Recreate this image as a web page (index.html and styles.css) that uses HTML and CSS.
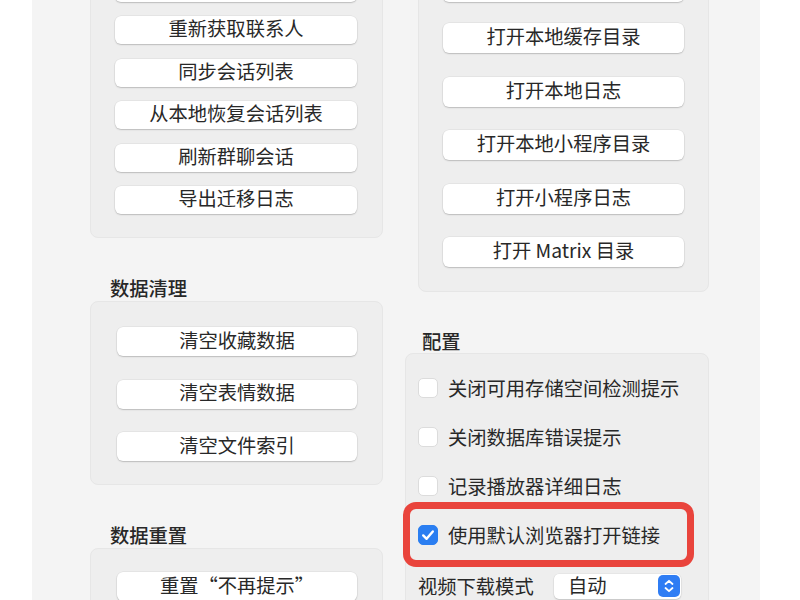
FILE: index.html
```html
<!DOCTYPE html>
<html lang="zh-CN">
<head>
<meta charset="utf-8">
<title>设置</title>
<link rel="stylesheet" href="styles.css">
</head>
<body>
<div class="window">
  <div class="col col-left">
    <div class="panel panel-a">
      <div class="btn" aria-hidden="true"></div>
      <div class="btn">重新获取联系人</div>
      <div class="btn">同步会话列表</div>
      <div class="btn">从本地恢复会话列表</div>
      <div class="btn">刷新群聊会话</div>
      <div class="btn">导出迁移日志</div>
    </div>
    <div class="title">数据清理</div>
    <div class="panel panel-b">
      <div class="btn">清空收藏数据</div>
      <div class="btn">清空表情数据</div>
      <div class="btn">清空文件索引</div>
    </div>
    <div class="title">数据重置</div>
    <div class="panel panel-c">
      <div class="btn">重置“不再提示”</div>
    </div>
  </div>
  <div class="col col-right">
    <div class="panel panel-d">
      <div class="btn" aria-hidden="true"></div>
      <div class="btn">打开本地缓存目录</div>
      <div class="btn">打开本地日志</div>
      <div class="btn">打开本地小程序目录</div>
      <div class="btn">打开小程序日志</div>
      <div class="btn">打开 Matrix 目录</div>
    </div>
    <div class="title title-r">配置</div>
    <div class="panel panel-e">
      <div class="row"><span class="cb"></span><span>关闭可用存储空间检测提示</span></div>
      <div class="row"><span class="cb"></span><span>关闭数据库错误提示</span></div>
      <div class="row"><span class="cb"></span><span>记录播放器详细日志</span></div>
      <div class="row row-mark"><span class="cb cb-on"><svg viewBox="0 0 20 20" width="20" height="20"><path d="M5.2 10.4 L8.6 13.8 L14.8 6.4" fill="none" stroke="#fff" stroke-width="2.4" stroke-linecap="round" stroke-linejoin="round"/></svg></span><span>使用默认浏览器打开链接</span><span class="mark"></span></div>
      <div class="row row-select"><span class="lbl">视频下载模式</span>
        <div class="select"><span>自动</span><span class="stepper"><svg viewBox="0 0 22 22" width="22" height="22"><path d="M7.5 9 L11 5.8 L14.5 9 M7.5 13 L11 16.2 L14.5 13" fill="none" stroke="#fff" stroke-width="1.8" stroke-linecap="round" stroke-linejoin="round"/></svg></span></div>
      </div>
    </div>
  </div>
</div>
</body>
</html>
```
FILE: styles.css
```css
html, body {
  margin: 0;
  padding: 0;
  background: #ffffff;
}
body {
  font-family: "Noto Sans CJK SC", "Noto Sans", sans-serif;
  font-size: 19.3px;
  color: #282828;
  width: 800px;
  height: 600px;
  overflow: hidden;
}
.window {
  margin-left: 32px;
  width: 728px;
  height: 600px;
  background: #f4f4f4;
  overflow: hidden;
  display: flex;
  align-items: flex-start;
  padding-left: 58px;
  box-sizing: border-box;
}
.col {
  display: flex;
  flex-direction: column;
}
.col-left {
  width: 293px;
  margin-top: -50.5px;
}
.col-right {
  width: 304px;
  margin-left: 22px;
  margin-top: -52px;
}
.panel {
  background: #eeeeee;
  border: 1px solid #e6e6e6;
  border-radius: 8px;
  box-sizing: border-box;
  display: flex;
  flex-direction: column;
}
.btn {
  background: #ffffff;
  border-radius: 6px;
  box-shadow: 0 1px 1.5px rgba(0, 0, 0, 0.18), 0 0 0 0.5px rgba(0, 0, 0, 0.07);
  display: flex;
  align-items: center;
  justify-content: center;
  line-height: 1;
  white-space: nowrap;
  padding-bottom: 2px;
  box-sizing: border-box;
}
.panel-a {
  padding: 23px 25px 23px 24px;
  gap: 14.5px;
}
.panel-a .btn {
  height: 28px;
}
.title {
  height: 24px;
  line-height: 24px;
  margin: 38px 0 1px 20px;
  font-weight: 500;
}
.panel-b {
  padding: 25px 25px 23px 26px;
  gap: 23.5px;
}
.panel-b .btn {
  height: 29px;
}
.panel-c {
  padding: 23px 25px 23px 26px;
}
.panel-c .btn {
  height: 29px;
}
.panel-d {
  margin-left: 13px;
  width: 291px;
  padding: 23px 24px 24px 24px;
  gap: 23.5px;
}
.panel-d .btn {
  height: 30px;
}
.panel-d .btn:first-child {
  margin-bottom: -2.5px;
}
.title-r {
  margin: 37px 0 0 17px;
}
.panel-e {
  padding: 9px 0 20px 12px;
}
.row {
  height: 49px;
  display: flex;
  align-items: center;
  position: relative;
  white-space: nowrap;
}
.cb {
  width: 20px;
  height: 20px;
  box-sizing: border-box;
  border-radius: 5px;
  background: #ffffff;
  border: 1px solid #dcdcdc;
  margin-right: 10px;
  flex: none;
}
.cb-on {
  background: #2a7ef1;
  border-color: #2a7ef1;
  position: relative;
}
.cb-on svg {
  position: absolute;
  left: -1px;
  top: -1px;
}
.mark {
  position: absolute;
  left: -15px;
  top: -8px;
  width: 291px;
  height: 65px;
  box-sizing: border-box;
  border: 7px solid #e9443c;
  border-radius: 13px;
}
.row-select {
  height: 50px;
  margin-top: 2px;
}
.lbl {
  width: 136px;
  flex: none;
}
.select {
  width: 127px;
  height: 25px;
  background: #ffffff;
  border-radius: 5px;
  box-shadow: 0 1px 1.5px rgba(0, 0, 0, 0.15), 0 0 0 0.5px rgba(0, 0, 0, 0.06);
  display: flex;
  align-items: center;
  justify-content: space-between;
  padding: 0 1px 0 14px;
  box-sizing: border-box;
  line-height: 1;
}
.stepper {
  width: 22px;
  height: 22px;
  border-radius: 5px;
  background: #2f7df4;
  display: flex;
}
```
